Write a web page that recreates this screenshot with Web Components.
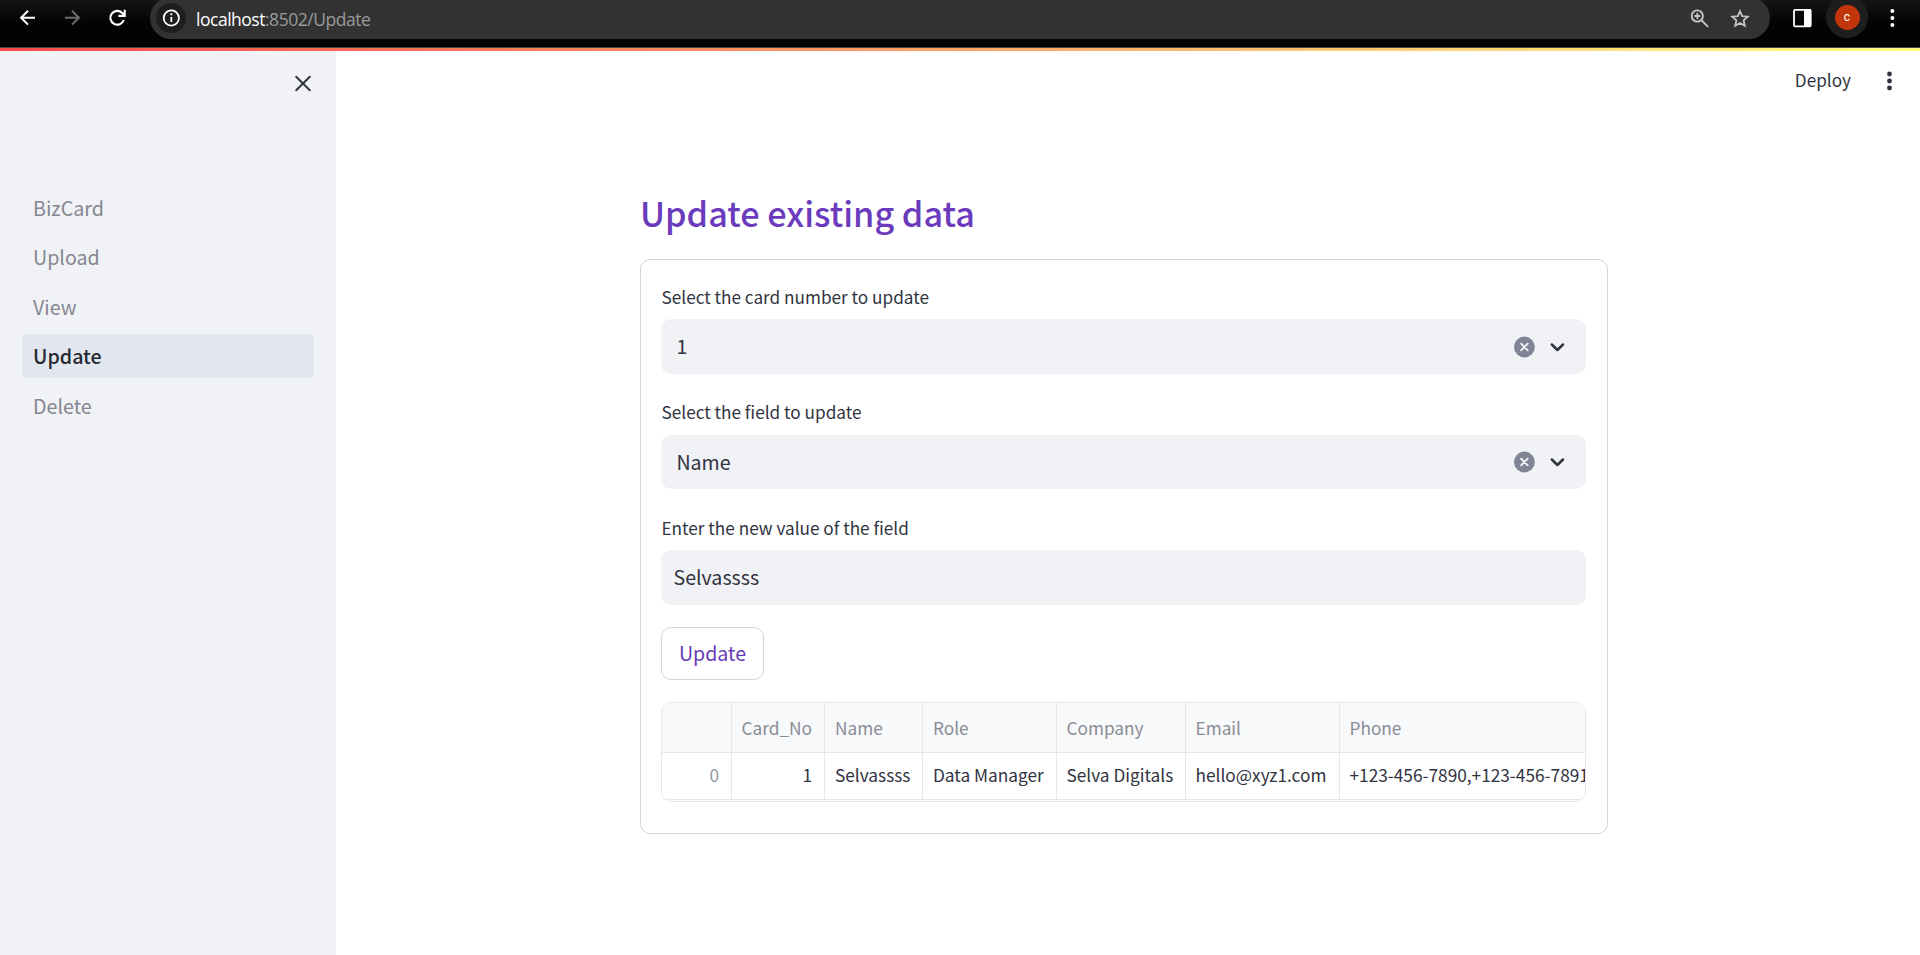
<!DOCTYPE html>
<html lang="en">
<head>
<meta charset="utf-8">
<title>Update</title>
<style>
html,body{margin:0;height:100%;overflow:hidden;background:#fff}
body{font-family:"Noto Sans CJK SC","Noto Sans",sans-serif;color:#31333f}
</style>
</head>
<body>
<biz-app></biz-app>
<script>
const define = (name, html, init) => customElements.define(name, class extends HTMLElement {
  connectedCallback() {
    if (this.shadowRoot) return;
    const t = document.createElement('template');
    t.innerHTML = html;
    this.attachShadow({mode: 'open'}).append(t.content.cloneNode(true));
    if (init) init(this, this.shadowRoot);
  }
});

/* Browser toolbar */
define('browser-bar', `
<style>
:host{display:flex;align-items:flex-start;height:47px;box-sizing:border-box;background:linear-gradient(#141414,#030303 24px,#030303);overflow:hidden}
svg{display:block;flex:none}
.nav{width:150px;height:39px}
.pill{display:flex;align-items:center;width:1620px;height:42px;margin-top:-3px;border-radius:21px;background:#323232;flex:none}
.url{flex:1;margin-left:10px;font:17.5px/24px "Open Sans",sans-serif;letter-spacing:-.48px;color:#9a9a9a;padding-top:1px}
.url b{font-weight:400;color:#fff}
.avatar{width:42px;height:42px;border-radius:50%;background:#1e1e1e;margin:-4px 0 0 56px;display:grid;place-items:center;flex:none}
.avatar span{width:25px;height:25px;border-radius:50%;background:#c3360c;color:#fff;font:400 12px/24px Roboto,sans-serif;text-align:center}
</style>
<svg class="nav" viewBox="0 0 150 39" fill="none" stroke-width="2">
<path stroke="#fff" d="M35 17.7H21.5M28 10.8l-6.9 6.9 6.9 6.9"/>
<path stroke="#6b6b6b" d="M65 17.7h13.5M72 10.8l6.9 6.9-6.9 6.9"/>
<path stroke="#fff" stroke-width="2.1" d="M123.8 20A6.9 6.9 0 1 1 122.2 12.9L124.4 15.4M124.7 9.8V15.9H118.4"/>
</svg>
<div class="pill">
<svg width="36" height="42" viewBox="150 -3 36 42"><circle cx="171" cy="18" r="15" fill="#1e1e1e"/><circle cx="171.3" cy="18" r="7.6" fill="none" stroke="#fff" stroke-width="1.8"/><path d="M171.3 17v5M171.3 13.3v1.9" stroke="#fff" stroke-width="1.8"/></svg>
<div class="url"><b>localhost</b>:8502/Update</div>
<svg width="90" height="42" viewBox="1680 -3 90 42" fill="none" stroke="#c4c4c4" stroke-width="1.9">
<circle cx="1697.3" cy="16" r="5.6"/><path d="M1701.3 20l6.8 6.8M1697.3 13.1v5.8M1694.4 16h5.8" stroke-width="1.8"/>
<path stroke-width="1.8" d="M1740 11.2l2.2 5 5.6.5-4.2 3.7 1.2 5.4-4.8-2.8-4.8 2.8 1.2-5.4-4.2-3.7 5.6-.5z"/></svg>
</div>
<svg width="20" height="36" viewBox="1770 0 20 36"></svg>
<svg width="24" height="36" viewBox="1790 0 24 36" style="margin-right:-44px"><rect x="1794" y="9.8" width="16.7" height="16.6" rx="1.2" fill="none" stroke="#fff" stroke-width="1.8"/><path fill="#fff" d="M1804 9h7v18h-7z"/></svg>
<div class="avatar"><span>c</span></div>
<svg width="52" height="36" viewBox="1868 0 52 36" fill="#fff"><circle cx="1892.4" cy="11" r="2"/><circle cx="1892.4" cy="18" r="2"/><circle cx="1892.4" cy="25" r="2"/></svg>
`);

define('nav-item', `
<style>
:host{display:flex;align-items:center;height:44px;padding-left:11px;border-radius:6px;font-size:19.65px;line-height:26px;color:#858791}
:host([active]){background:#e2e7ee;color:#262832;font-weight:500}
slot{display:block;margin-top:-1px}
:host(.low) slot{margin-top:1px}
</style><slot></slot>`);

define('side-bar', `
<style>
:host{display:block;width:336px;flex:none;background:#f0f2f6;box-sizing:border-box}
header{display:flex;justify-content:flex-end;height:135px;padding:23px 23.5px 0 0;box-sizing:border-box}
nav{display:flex;flex-direction:column;gap:5.4px;padding:0 22px}
</style>
<header><svg width="20" height="20" viewBox="0 0 20 20" fill="none" stroke="#31333f" stroke-width="2" stroke-linecap="round"><path d="M3.2 2.7l13.6 13.6M16.8 2.7L3.2 16.3"/></svg></header>
<nav><nav-item>BizCard</nav-item><nav-item>Upload</nav-item><nav-item class="low">View</nav-item><nav-item active>Update</nav-item><nav-item class="low">Delete</nav-item></nav>
`);

define('app-menu', `
<style>
:host{display:flex;justify-content:flex-end;align-items:center;height:60px;font-size:17.2px;line-height:24px;gap:24px}
svg{display:block}
span{margin-top:-3px}
</style>
<span>Deploy</span>
<svg width="45" height="24" viewBox="0 0 45 24" fill="#31333f"><circle cx="14.5" cy="5" r="2.4"/><circle cx="14.5" cy="12" r="2.4"/><circle cx="14.5" cy="19" r="2.4"/></svg>
`);

/* Labelled field: a select with clear and open icons, or a plain text input */
define('form-field', `
<style>
:host{display:block;height:115px}
label{display:block;height:39px;font-size:17.22px;line-height:34px;padding-left:.5px}
.box{display:flex;align-items:center;height:55px;border-radius:10px;background:#f0f2f6;font-size:19.6px;line-height:26px;padding-left:15.4px;box-sizing:border-box}
:host([plain]) .box{padding-left:12.5px}
:host([plain]) svg{display:none}
:host(.mid){height:116px}
:host(.mid) label{height:40px}
:host(.mid) .box{height:54px}
:host(.mid) .value{margin-top:0}
.value{flex:1;margin-top:-2px}
</style>
<label></label>
<div class="box"><span class="value"><slot></slot></span>
<svg width="74" height="24" viewBox="0 0 74 24" fill="none" stroke-linecap="round">
<circle cx="12.4" cy="12" r="10.4" fill="#808495"/><path stroke="#f0f2f6" stroke-width="1.9" d="M9.1 8.7l6.6 6.6M15.7 8.7l-6.6 6.6"/>
<path stroke="#31333f" stroke-width="2.5" stroke-linejoin="round" d="M39.8 9.5l5.6 5.5 5.6-5.5"/></svg></div>
`, (el, root) => { root.querySelector('label').textContent = el.getAttribute('label'); });

define('data-table', `
<style>
:host{display:block;height:100px;box-sizing:border-box;border:1px solid #e6e7ea;border-radius:10px;overflow:hidden;font-size:17.25px;line-height:24px}
.row{display:grid;grid-template-columns:70px 93px 98px 133.5px 129px 154px 247px;height:47px;box-sizing:border-box;border-bottom:1px solid #e6e7ea}
.row.head{height:50px;background:#f8f9fb;color:#8a8c95}
.row>span{display:flex;align-items:center;padding:0 0 2px 10px;border-right:1px solid #e6e7ea;white-space:nowrap}
.row.head>span{padding-bottom:0}
.row>span:last-child{border-right:0;padding-right:0}
.row .num{justify-content:flex-end;padding-right:12px}
.idx{color:#95979f}
</style>
<div class="row head"><span></span><span class="num">Card_No</span><span>Name</span><span>Role</span><span>Company</span><span>Email</span><span>Phone</span></div>
<div class="row"><span class="num idx">0</span><span class="num">1</span><span>Selvassss</span><span>Data Manager</span><span>Selva Digitals</span><span>hello@xyz1.com</span><span>+123-456-7890,+123-456-7891</span></div>
`);

define('action-button', `
<style>
:host{display:flex;width:103px;height:53px;box-sizing:border-box;border:1px solid #d6d6d9;border-radius:10px;align-items:center;justify-content:center;color:#673ab7;font-size:19.6px;line-height:26px;padding-bottom:2px}
</style><slot></slot>`);

define('update-form', `
<style>
:host{display:block;width:968px;margin-left:304px}
h2{margin:0;height:148px;padding-top:78px;box-sizing:border-box;font-size:34.2px;line-height:46px;font-weight:500;color:#6b3bbd}
form{height:575px;box-sizing:border-box;border:1px solid #d6d6d9;border-radius:10px;padding:20px 21px 20px 20px}
data-table{margin-top:22px}
form-field:last-of-type{height:116px}
</style>
<h2>Update existing data</h2>
<form>
<form-field label="Select the card number to update">1</form-field>
<form-field class="mid" label="Select the field to update">Name</form-field>
<form-field plain label="Enter the new value of the field">Selvassss</form-field>
<action-button>Update</action-button>
<data-table></data-table>
</form>
`);

define('biz-app', `
<style>
:host{display:flex;flex-direction:column;height:955px;background:#48484a}
.deco{height:3px;flex:none;background:linear-gradient(90deg,#ff4b4b,#fffd80);margin-top:1px}
.page{display:flex;flex:1;background:#fff}
main{flex:1;min-width:0}
browser-bar{flex:none}
</style>
<browser-bar></browser-bar>
<div class="deco"></div>
<div class="page"><side-bar></side-bar><main><app-menu></app-menu><update-form></update-form></main></div>
`);
</script>
</body>
</html>
